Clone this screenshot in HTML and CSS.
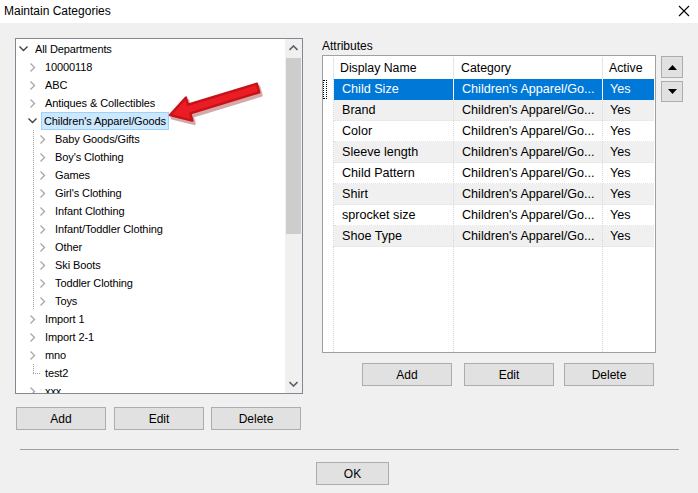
FILE: index.html
```html
<!DOCTYPE html>
<html lang="en">
<head>
    <meta charset="UTF-8">
    <title>Maintain Categories</title>
    <link rel="stylesheet" href="styles.css">
</head>
<body>
    <div class="window">
        <!-- title bar -->
        <div class="titlebar">
            <span class="title">Maintain Categories</span>
            <svg class="close" width="12" height="12" viewBox="0 0 12 12"><path d="M1 1 L11 11 M11 1 L1 11" stroke="#000" stroke-width="1.1"/></svg>
        </div>

        <div class="content">
            <!-- category tree -->
            <div class="left">
                <div class="tree">
                    <div class="tree-items">
                        <div class="node lvl0"><svg class="exp" width="9" height="6" viewBox="0 0 9 6"><polyline points="0.5,0.5 4.5,4.5 8.5,0.5" fill="none" stroke="#404040" stroke-width="1.3"/></svg><span>All Departments</span></div>
                        <div class="node lvl1"><svg class="col" width="6" height="9" viewBox="0 0 6 9"><polyline points="0.5,0.5 4.5,4.5 0.5,8.5" fill="none" stroke="#a6a6a6" stroke-width="1.3"/></svg><span>10000118</span></div>
                        <div class="node lvl1"><svg class="col" width="6" height="9" viewBox="0 0 6 9"><polyline points="0.5,0.5 4.5,4.5 0.5,8.5" fill="none" stroke="#a6a6a6" stroke-width="1.3"/></svg><span>ABC</span></div>
                        <div class="node lvl1"><svg class="col" width="6" height="9" viewBox="0 0 6 9"><polyline points="0.5,0.5 4.5,4.5 0.5,8.5" fill="none" stroke="#a6a6a6" stroke-width="1.3"/></svg><span>Antiques &amp; Collectibles</span></div>
                        <div class="node lvl1"><svg class="exp" width="9" height="6" viewBox="0 0 9 6"><polyline points="0.5,0.5 4.5,4.5 8.5,0.5" fill="none" stroke="#404040" stroke-width="1.3"/></svg><span class="selected">Children's Apparel/Goods</span></div>
                        <div class="children">
                            <div class="node lvl2"><svg class="col" width="6" height="9" viewBox="0 0 6 9"><polyline points="0.5,0.5 4.5,4.5 0.5,8.5" fill="none" stroke="#a6a6a6" stroke-width="1.3"/></svg><span>Baby Goods/Gifts</span></div>
                            <div class="node lvl2"><svg class="col" width="6" height="9" viewBox="0 0 6 9"><polyline points="0.5,0.5 4.5,4.5 0.5,8.5" fill="none" stroke="#a6a6a6" stroke-width="1.3"/></svg><span>Boy's Clothing</span></div>
                            <div class="node lvl2"><svg class="col" width="6" height="9" viewBox="0 0 6 9"><polyline points="0.5,0.5 4.5,4.5 0.5,8.5" fill="none" stroke="#a6a6a6" stroke-width="1.3"/></svg><span>Games</span></div>
                            <div class="node lvl2"><svg class="col" width="6" height="9" viewBox="0 0 6 9"><polyline points="0.5,0.5 4.5,4.5 0.5,8.5" fill="none" stroke="#a6a6a6" stroke-width="1.3"/></svg><span>Girl's Clothing</span></div>
                            <div class="node lvl2"><svg class="col" width="6" height="9" viewBox="0 0 6 9"><polyline points="0.5,0.5 4.5,4.5 0.5,8.5" fill="none" stroke="#a6a6a6" stroke-width="1.3"/></svg><span>Infant Clothing</span></div>
                            <div class="node lvl2"><svg class="col" width="6" height="9" viewBox="0 0 6 9"><polyline points="0.5,0.5 4.5,4.5 0.5,8.5" fill="none" stroke="#a6a6a6" stroke-width="1.3"/></svg><span>Infant/Toddler Clothing</span></div>
                            <div class="node lvl2"><svg class="col" width="6" height="9" viewBox="0 0 6 9"><polyline points="0.5,0.5 4.5,4.5 0.5,8.5" fill="none" stroke="#a6a6a6" stroke-width="1.3"/></svg><span>Other</span></div>
                            <div class="node lvl2"><svg class="col" width="6" height="9" viewBox="0 0 6 9"><polyline points="0.5,0.5 4.5,4.5 0.5,8.5" fill="none" stroke="#a6a6a6" stroke-width="1.3"/></svg><span>Ski Boots</span></div>
                            <div class="node lvl2"><svg class="col" width="6" height="9" viewBox="0 0 6 9"><polyline points="0.5,0.5 4.5,4.5 0.5,8.5" fill="none" stroke="#a6a6a6" stroke-width="1.3"/></svg><span>Toddler Clothing</span></div>
                            <div class="node lvl2"><svg class="col" width="6" height="9" viewBox="0 0 6 9"><polyline points="0.5,0.5 4.5,4.5 0.5,8.5" fill="none" stroke="#a6a6a6" stroke-width="1.3"/></svg><span>Toys</span></div>
                        </div>
                        <div class="node lvl1"><svg class="col" width="6" height="9" viewBox="0 0 6 9"><polyline points="0.5,0.5 4.5,4.5 0.5,8.5" fill="none" stroke="#a6a6a6" stroke-width="1.3"/></svg><span>Import 1</span></div>
                        <div class="node lvl1"><svg class="col" width="6" height="9" viewBox="0 0 6 9"><polyline points="0.5,0.5 4.5,4.5 0.5,8.5" fill="none" stroke="#a6a6a6" stroke-width="1.3"/></svg><span>Import 2-1</span></div>
                        <div class="node lvl1"><svg class="col" width="6" height="9" viewBox="0 0 6 9"><polyline points="0.5,0.5 4.5,4.5 0.5,8.5" fill="none" stroke="#a6a6a6" stroke-width="1.3"/></svg><span>mno</span></div>
                        <div class="node lvl1 leaf"><i class="leaf-line"></i><span>test2</span></div>
                        <div class="node lvl1"><svg class="col" width="6" height="9" viewBox="0 0 6 9"><polyline points="0.5,0.5 4.5,4.5 0.5,8.5" fill="none" stroke="#a6a6a6" stroke-width="1.3"/></svg><span>xxx</span></div>
                    </div>
                    <div class="vscroll">
                        <svg class="sarrow" width="9" height="6" viewBox="0 0 9 6"><polyline points="0.5,5 4.5,1 8.5,5" fill="none" stroke="#606060" stroke-width="1.6"/></svg>
                        <div class="track"><div class="thumb"></div></div>
                        <svg class="sarrow" width="9" height="6" viewBox="0 0 9 6"><polyline points="0.5,1 4.5,5 8.5,1" fill="none" stroke="#606060" stroke-width="1.6"/></svg>
                    </div>
                </div>
                <div class="btn-row left-btns">
                    <button class="btn">Add</button>
                    <button class="btn">Edit</button>
                    <button class="btn">Delete</button>
                </div>
            </div>

            <!-- attributes grid -->
            <div class="right">
                <div class="group-label">Attributes</div>
                <div class="grid-wrap">
                    <div class="grid">
                        <div class="grow header">
                            <div class="rh"></div>
                            <div class="c1">Display Name</div>
                            <div class="c2">Category</div>
                            <div class="c3">Active</div>
                        </div>
                        <div class="grow sel">
                            <div class="rh"><i class="focus"></i></div>
                            <div class="c1">Child Size</div>
                            <div class="c2">Children's Apparel/Go...</div>
                            <div class="c3">Yes</div>
                        </div>
                        <div class="grow alt">
                            <div class="rh"></div>
                            <div class="c1">Brand</div>
                            <div class="c2">Children's Apparel/Go...</div>
                            <div class="c3">Yes</div>
                        </div>
                        <div class="grow">
                            <div class="rh"></div>
                            <div class="c1">Color</div>
                            <div class="c2">Children's Apparel/Go...</div>
                            <div class="c3">Yes</div>
                        </div>
                        <div class="grow alt">
                            <div class="rh"></div>
                            <div class="c1">Sleeve length</div>
                            <div class="c2">Children's Apparel/Go...</div>
                            <div class="c3">Yes</div>
                        </div>
                        <div class="grow">
                            <div class="rh"></div>
                            <div class="c1">Child Pattern</div>
                            <div class="c2">Children's Apparel/Go...</div>
                            <div class="c3">Yes</div>
                        </div>
                        <div class="grow alt">
                            <div class="rh"></div>
                            <div class="c1">Shirt</div>
                            <div class="c2">Children's Apparel/Go...</div>
                            <div class="c3">Yes</div>
                        </div>
                        <div class="grow">
                            <div class="rh"></div>
                            <div class="c1">sprocket size</div>
                            <div class="c2">Children's Apparel/Go...</div>
                            <div class="c3">Yes</div>
                        </div>
                        <div class="grow alt">
                            <div class="rh"></div>
                            <div class="c1">Shoe Type</div>
                            <div class="c2">Children's Apparel/Go...</div>
                            <div class="c3">Yes</div>
                        </div>
                        <div class="grow filler">
                            <div class="rh"></div>
                            <div class="c1"></div>
                            <div class="c2"></div>
                            <div class="c3"></div>
                        </div>
                    </div>
                    <div class="move-btns">
                        <button class="btn small"><svg width="9" height="5" viewBox="0 0 9 5"><polygon points="0,5 4.5,0 9,5" fill="#000"/></svg></button>
                        <button class="btn small"><svg width="9" height="5" viewBox="0 0 9 5"><polygon points="0,0 4.5,5 9,0" fill="#000"/></svg></button>
                    </div>
                </div>
                <div class="btn-row right-btns">
                    <button class="btn">Add</button>
                    <button class="btn">Edit</button>
                    <button class="btn">Delete</button>
                </div>
            </div>
        </div>

        <div class="separator"></div>
        <div class="footer">
            <button class="btn ok">OK</button>
        </div>

        <!-- red callout arrow -->
        <svg class="callout" width="104" height="50" viewBox="0 0 104 50">
            <polygon points="5,35 27.3,40.6 25.3,33.4 94.2,12.3 91.8,3.7 22.9,24.8 20.9,17.6" fill="#8a0a0a" opacity="0.35" transform="translate(2,3)" stroke="#8a0a0a" stroke-width="3" stroke-linejoin="round"/>
            <polygon points="5,35 27.3,40.6 25.3,33.4 94.2,12.3 91.8,3.7 22.9,24.8 20.9,17.6" fill="#ec1c24" stroke="#c8121a" stroke-width="2.5" stroke-linejoin="round"/>
        </svg>
    </div>
</body>
</html>
```

FILE: styles.css
```css
* {
    margin: 0;
    padding: 0;
    box-sizing: border-box;
}

body {
    font-family: 'Liberation Sans', Arial, sans-serif;
    font-size: 12px;
    color: #000;
    background: #f0f0f0;
}

.window {
    position: relative;
    width: 698px;
    height: 493px;
    background: #f0f0f0;
}

/* title bar */
.titlebar {
    height: 23px;
    background: #fff;
    display: flex;
    align-items: center;
    justify-content: space-between;
    padding: 0 8px 2px 4px;
}

.title {
    font-size: 12px;
}

.content {
    display: flex;
    padding: 15px 0 0 15px;
}

/* tree */
.left {
    width: 288px;
}

.tree {
    height: 356px;
    border: 1px solid #828790;
    background: #fff;
    display: flex;
    overflow: hidden;
}

.tree-items {
    flex: 1;
    overflow: hidden;
    padding-top: 1px;
    font-size: 11px;
    letter-spacing: -0.1px;
}

.node {
    height: 18px;
    display: flex;
    align-items: center;
    white-space: nowrap;
}

.node svg {
    flex: none;
}

.node span {
    padding: 1px 2px;
    border: 1px solid transparent;
    line-height: 14px;
}

.lvl0 { padding-left: 3px; }
.lvl0 .exp { margin-right: 4px; }

.lvl1 { padding-left: 14px; }
.lvl1 .col { margin-right: 6px; }
.lvl1 .exp { margin-left: -2px; margin-right: 4px; }

.lvl2 { padding-left: 7px; }
.lvl2 .col { margin-right: 6px; }

.children {
    margin-left: 17px;
    background-image: linear-gradient(#a0a0a0 50%, transparent 50%);
    background-size: 1px 2px;
    background-repeat: repeat-y;
    background-position: 0 0;
}

.leaf-line {
    display: block;
    width: 7px;
    height: 18px;
    margin-left: 3px;
    margin-right: 2px;
    align-self: flex-start;
    background:
        linear-gradient(90deg, #a0a0a0 50%, transparent 50%),
        linear-gradient(#a0a0a0 50%, transparent 50%);
    background-size: 2px 1px, 1px 2px;
    background-repeat: repeat-x, repeat-y;
    background-position: 0 9px, 0 0;
    clip-path: inset(0 0 8px 0);
}

.selected {
    background: #cce8ff;
    border-color: #99d1ff !important;
}

.vscroll {
    width: 17px;
    background: #f0f0f0;
    display: flex;
    flex-direction: column;
    align-items: center;
}

.sarrow {
    margin: 6px 0;
    flex: none;
}

.track {
    flex: 1;
    width: 100%;
    display: flex;
    justify-content: center;
}

.thumb {
    width: 15px;
    height: 176px;
    margin-top: 1px;
    background: #cdcdcd;
}

/* buttons */
.btn {
    font-family: inherit;
    font-size: 12px;
    width: 90px;
    height: 23px;
    background: #e1e1e1;
    border: 1px solid #adadad;
    color: #000;
    display: flex;
    align-items: center;
    justify-content: center;
}

.btn-row {
    display: flex;
}

.left-btns {
    margin-top: 13px;
    padding-left: 1px;
    gap: 8px;
}

.left-btns .btn:last-child {
    margin-left: -1px;
}

/* attributes */
.right {
    margin-left: 19px;
}

.group-label {
    height: 17px;
    line-height: 14px;
    padding-top: 1px;
}

.grid-wrap {
    display: flex;
    gap: 5px;
}

.grid {
    width: 334px;
    height: 298px;
    border: 1px solid #a0a0a0;
    background: #fff;
    padding: 1px 1px 0 0;
    display: flex;
    flex-direction: column;
    overflow: hidden;
    font-size: 12.6px;
}

.grow {
    height: 21px;
    display: flex;
    flex: none;
}

.grow > div {
    white-space: nowrap;
    overflow: hidden;
    line-height: 21px;
    padding-left: 8px;
    border-right: 1px dotted #d8d8d8;
    border-bottom: 1px dotted #e4e4e4;
}

.grow .rh {
    width: 11px;
    padding: 0;
    position: relative;
    border-bottom: none;
}

.grow .c1 { width: 120px; }
.grow .c2 { width: 149px; }
.grow .c3 { width: 51px; padding-left: 7px; border-right: none; }

.header {
    height: 22px;
    font-size: 12.3px;
}

.header > div {
    border-right: 1px solid #e5e5e5;
    border-bottom: none;
    padding-left: 6px;
    line-height: 22px;
}

.header .c2 { padding-left: 7px; }
.header .c3 { padding-left: 6px; }

.alt > div:not(.rh) {
    background: #f0f0f0;
}

.sel > div:not(.rh) {
    background: #0078d7;
    color: #fff;
    border-right: 1px solid #fff;
    border-bottom: none;
}

.sel .c3 { border-right: none !important; }

.focus {
    position: absolute;
    left: 0;
    top: 1px;
    width: 4px;
    height: 19px;
    border: 1px dotted #000;
}

.filler {
    flex: 1;
}

.filler > div {
    border-bottom: none;
}

.move-btns {
    display: flex;
    flex-direction: column;
    gap: 3px;
    padding-top: 1px;
}

.btn.small {
    width: 22px;
    height: 22px;
}

.btn.small + .btn.small {
    height: 21px;
}

.right-btns {
    margin-top: 10px;
    padding-left: 40px;
    gap: 12px;
}

.right-btns .btn:last-child {
    margin-left: -2px;
}

/* footer */
.separator {
    margin: 19px 19px 0 20px;
    height: 1px;
    background: #a0a0a0;
}

.footer {
    padding: 12px 0 0 316px;
}

.btn.ok {
    width: 73px;
    height: 23px;
}

.callout {
    position: absolute;
    left: 165px;
    top: 80px;
}
```
